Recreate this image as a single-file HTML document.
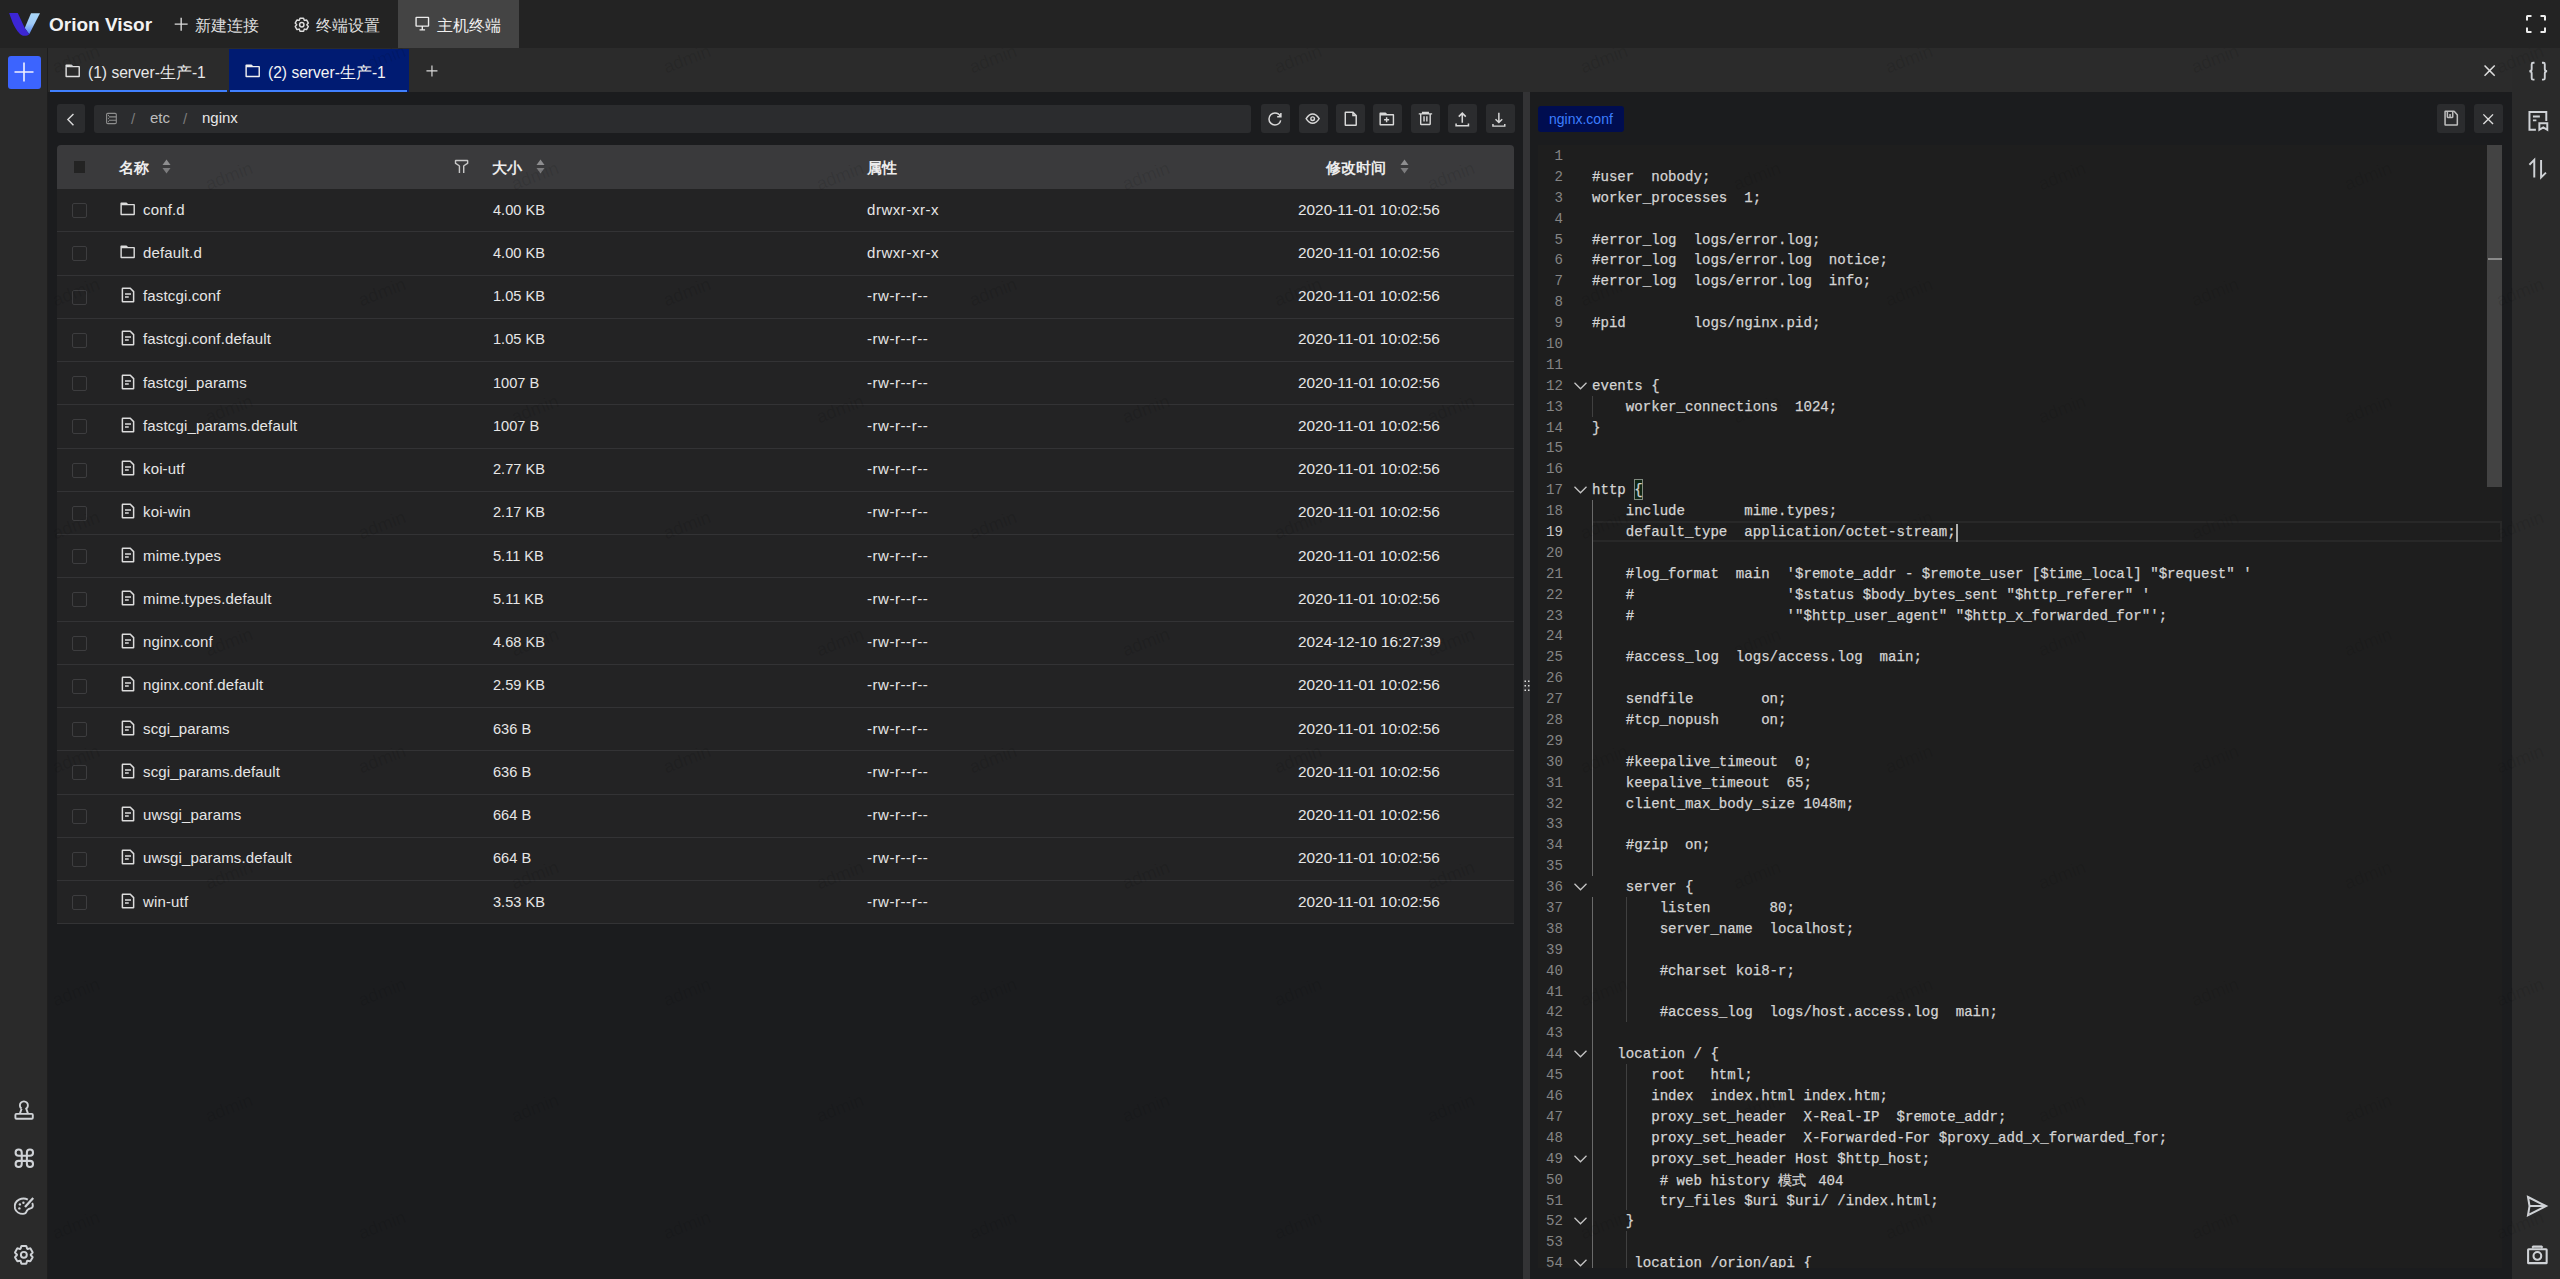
<!DOCTYPE html><html><head><meta charset="utf-8"><style>
*{box-sizing:border-box;margin:0;padding:0}
html,body{width:2560px;height:1279px;overflow:hidden;background:#1b1c1e;font-family:"Liberation Sans",sans-serif;color:rgba(255,255,255,.85)}
.a{position:absolute}
svg{display:block;position:absolute;overflow:visible}
.t{position:absolute;white-space:nowrap}
.navtxt{font-size:15.5px;color:#dedede;top:15.8px;line-height:20px}
.tabtxt{font-size:15.6px;line-height:20px;top:62.5px;color:#e8e8e8}
.btn{position:absolute;background:#2b2c2e;border-radius:3px}
.row{position:absolute;left:57px;width:1457px;height:43.25px;background:#232324;border-bottom:1px solid #333335}
.cell{position:absolute;font-size:15px;line-height:20px;top:10.6px;color:#e6e6e6;white-space:nowrap}
.cb{position:absolute;left:15px;top:14px;width:15px;height:15px;border:1.5px solid #3d3d3f;border-radius:2px}
.hd{position:absolute;font-size:15px;font-weight:bold;color:#ececec;line-height:20px;top:158px;white-space:nowrap}
.code{position:absolute;font-family:"Liberation Mono",monospace;font-size:14.1px;line-height:20.89px;white-space:pre;color:#d4d4d4;-webkit-text-stroke:0.25px #d4d4d4}
.ln{position:absolute;font-family:"Liberation Mono",monospace;font-size:14.1px;line-height:20.89px;color:#858585;text-align:right;width:40px}
.guide{position:absolute;width:1px;background:#404040}
.wm{position:absolute;width:60px;height:22px;line-height:22px;text-align:center;font-size:18px;color:rgba(0,0,0,.09);transform:rotate(-21deg);white-space:nowrap}
</style></head><body>
<div class="a" style="left:0;top:0;width:2560px;height:48px;background:#232323"></div>
<div class="a" style="left:0;top:48px;width:47px;height:1231px;background:#2a2a2a"></div>
<div class="a" style="left:47px;top:48px;width:1px;height:1231px;background:#1e1e1e"></div>
<div class="a" style="left:2512px;top:48px;width:48px;height:1231px;background:#2a2a2a"></div>
<div class="a" style="left:48px;top:48px;width:2464px;height:44px;background:#2b2b2b"></div>
<svg style="left:9px;top:13px" width="32" height="24" viewBox="0 0 32 24">
  <defs><linearGradient id="lg" x1="0" y1="0" x2="0" y2="1"><stop offset="0" stop-color="#aad7f8"/><stop offset="0.5" stop-color="#a0cbf7"/><stop offset="1" stop-color="#5080f5"/></linearGradient></defs>
  <path d="M22 0.2 L31 0.2 L20.2 21.2 L15.75 15 Z" fill="url(#lg)"/>
  <path d="M0.1 0 L8.75 0 L15.75 15 L20.2 21.2 C19.2 22.3 17.6 22.8 15.6 22.8 C13.6 22.8 12 22 10.5 20.5 C7.5 17.5 5 12.8 3.4 9 Z" fill="#3c26d4"/>
</svg>
<div class="t" style="left:49px;top:12.5px;font-size:19px;font-weight:bold;color:#f2f2f2;line-height:24px">Orion Visor</div>
<svg style="left:172.58px;top:15.98px" width="16.34" height="16.34" viewBox="0 0 48 48" fill="none" stroke="#dcdcdc" stroke-width="4" stroke-linecap="butt" stroke-linejoin="miter"><path d="M5 24h38M24 5v38"/></svg>
<div class="t navtxt" style="left:195px">新建连接</div>
<svg style="left:293.00px;top:15.54px" width="17.56" height="17.56" viewBox="0 0 48 48" fill="none" stroke="#dcdcdc" stroke-width="4" stroke-linecap="butt" stroke-linejoin="miter"><path d="M18.797 6.732A1 1 0 0 1 19.76 6h8.48a1 1 0 0 1 .964.732l1.285 4.628a1 1 0 0 0 1.213.7l4.651-1.2a1 1 0 0 1 1.116.468l4.24 7.344a1 1 0 0 1-.153 1.2L38.193 23.3a1 1 0 0 0 0 1.402l3.364 3.427a1 1 0 0 1 .153 1.2l-4.24 7.344a1 1 0 0 1-1.116.468l-4.65-1.2a1 1 0 0 0-1.214.7l-1.285 4.628a1 1 0 0 1-.964.732h-8.48a1 1 0 0 1-.963-.732L17.51 36.64a1 1 0 0 0-1.213-.7l-4.65 1.2a1 1 0 0 1-1.116-.468l-4.24-7.344a1 1 0 0 1 .153-1.2L9.809 24.7a1 1 0 0 0 0-1.402l-3.364-3.427a1 1 0 0 1-.153-1.2l4.24-7.344a1 1 0 0 1 1.116-.468l4.65 1.2a1 1 0 0 0 1.214-.7l1.285-4.628Z M30 24a6 6 0 1 1-12 0 6 6 0 0 1 12 0Z"/></svg>
<div class="t navtxt" style="left:316px">终端设置</div>
<div class="a" style="left:398px;top:0;width:121px;height:48px;background:#444"></div>
<svg style="left:414.22px;top:15.17px" width="16.62" height="16.62" viewBox="0 0 48 48" fill="none" stroke="#ececec" stroke-width="4" stroke-linecap="butt" stroke-linejoin="miter"><path d="M24 32v11m-8 0h16M7 7h34a1 1 0 0 1 1 1v23a1 1 0 0 1-1 1H7a1 1 0 0 1-1-1V8a1 1 0 0 1 1-1Z"/></svg>
<div class="t navtxt" style="left:437px;color:#f0f0f0">主机终端</div>
<svg style="left:2524.00px;top:12.00px" width="24.00" height="24.00" viewBox="0 0 48 48" fill="none" stroke="#ececec" stroke-width="4" stroke-linecap="butt" stroke-linejoin="miter"><path d="M42 17V9a1 1 0 0 0-1-1h-8M6 17V9a1 1 0 0 1 1-1h8m27 23v8a1 1 0 0 1-1 1h-8M6 31v8a1 1 0 0 0 1 1h8"/></svg>
<div class="a" style="left:8px;top:56px;width:33px;height:33px;background:#3c64fe;border-radius:3px"></div>
<svg style="left:14px;top:62px" width="20" height="20" viewBox="0 0 20 20"><path d="M10 0.5v19M0.5 10h19" stroke="#f0f0ff" stroke-width="1.6"/></svg>
<svg style="left:10px;top:1095px" width="30" height="30" viewBox="0 0 30 30" fill="none" stroke="#cfd2d6" stroke-width="1.9"><path d="M11.6 13.6A4 4 0 1 1 16.2 13.6L18 18.6M11.6 13.6L9.9 18.6"/><rect x="5.4" y="18.9" width="17.4" height="4.8" rx="1"/></svg>
<svg style="left:11.93px;top:1145.93px" width="24.63" height="24.63" viewBox="0 0 48 48" fill="none" stroke="#cfd2d6" stroke-width="4" stroke-linecap="butt" stroke-linejoin="miter"><path d="M29 19v-6a6 6 0 1 1 6 6h-6Zm0 0v10m0-10H19m10 10v6a6 6 0 1 0 6-6h-6Zm0 0H19m0-10v10m0-10h-6a6 6 0 1 1 6-6v6Zm0 10v6a6 6 0 1 1-6-6h6Z"/></svg>
<svg style="left:10px;top:1192px" width="30" height="30" viewBox="0 0 30 30" fill="none" stroke="#cfd2d6" stroke-width="1.9"><path d="M17.8 7.6C15.5 6.3 12 6.1 9 7.6 5.6 9.4 4.3 13 5 16.5 5.9 20 9.5 21.9 13 21.9 15 21.9 16 21.4 16.5 19.6 17 17.7 18.5 16.9 20.5 16.4 22.4 15.9 23 14.6 22.8 13.1 22.7 12.1 22.5 11.5 22.1 11"/><path d="M15 15 23.2 5.9" stroke-width="2.3"/><circle cx="9.9" cy="12.4" r="1.2" fill="#cfd2d6" stroke="none"/><circle cx="13.4" cy="10.7" r="1.2" fill="#cfd2d6" stroke="none"/><circle cx="9.4" cy="16.4" r="1.2" fill="#cfd2d6" stroke="none"/></svg>
<svg style="left:12.18px;top:1243.03px" width="23.70" height="23.70" viewBox="0 0 48 48" fill="none" stroke="#cfd2d6" stroke-width="4" stroke-linecap="butt" stroke-linejoin="miter"><path d="M18.797 6.732A1 1 0 0 1 19.76 6h8.48a1 1 0 0 1 .964.732l1.285 4.628a1 1 0 0 0 1.213.7l4.651-1.2a1 1 0 0 1 1.116.468l4.24 7.344a1 1 0 0 1-.153 1.2L38.193 23.3a1 1 0 0 0 0 1.402l3.364 3.427a1 1 0 0 1 .153 1.2l-4.24 7.344a1 1 0 0 1-1.116.468l-4.65-1.2a1 1 0 0 0-1.214.7l-1.285 4.628a1 1 0 0 1-.964.732h-8.48a1 1 0 0 1-.963-.732L17.51 36.64a1 1 0 0 0-1.213-.7l-4.65 1.2a1 1 0 0 1-1.116-.468l-4.24-7.344a1 1 0 0 1 .153-1.2L9.809 24.7a1 1 0 0 0 0-1.402l-3.364-3.427a1 1 0 0 1-.153-1.2l4.24-7.344a1 1 0 0 1 1.116-.468l4.65 1.2a1 1 0 0 0 1.214-.7l1.285-4.628Z M30 24a6 6 0 1 1-12 0 6 6 0 0 1 12 0Z"/></svg>
<svg style="left:2526.60px;top:60.13px" width="22.47" height="22.47" viewBox="0 0 48 48" fill="none" stroke="#cfd2d6" stroke-width="4" stroke-linecap="butt" stroke-linejoin="miter"><path d="M16 6h-3a3 3 0 0 0-3 3v10q0 5-5 5 5 0 5 5v10a3 3 0 0 0 3 3h3 M32 6h3a3 3 0 0 1 3 3v10q0 5 5 5-5 0-5 5v10a3 3 0 0 1-3 3h-3"/></svg>
<svg style="left:2525.53px;top:109.02px" width="23.76" height="23.76" viewBox="0 0 48 48" fill="none" stroke="#cfd2d6" stroke-width="4" stroke-linecap="butt" stroke-linejoin="miter"><path d="M20 42H7V6h34v18 M14 15h14M14 23h7 M27 29h16v13l-8-5-8 5Z"/></svg>
<svg style="left:2525.57px;top:157.05px" width="23.37" height="23.37" viewBox="0 0 48 48" fill="none" stroke="#cfd2d6" stroke-width="4" stroke-linecap="butt" stroke-linejoin="miter"><path d="M7 16 17 6V42 M31 6V42L41 32"/></svg>
<svg style="left:2524.79px;top:1193.99px" width="24.12" height="24.12" viewBox="0 0 48 48" fill="none" stroke="#cfd2d6" stroke-width="4" stroke-linecap="butt" stroke-linejoin="miter"><path d="M6 6 42 24 6 42 9 24Z M9 24h33"/></svg>
<svg style="left:2524.94px;top:1241.67px" width="24.75" height="24.75" viewBox="0 0 48 48" fill="none" stroke="#cfd2d6" stroke-width="4" stroke-linecap="butt" stroke-linejoin="miter"><path d="M34 11L32 9H16L14 11M24 34.5a7.5 7.5 0 1 0 0-15 7.5 7.5 0 0 0 0 15ZM7 14h34a1 1 0 0 1 1 1v25a1 1 0 0 1-1 1H7a1 1 0 0 1-1-1V15a1 1 0 0 1 1-1Z"/></svg>
<svg style="left:63.58px;top:62.02px" width="17.00" height="17.00" viewBox="0 0 48 48" fill="none" stroke="#e0e0e0" stroke-width="4" stroke-linecap="butt" stroke-linejoin="miter"><path d="M6 13h18l-2.527-3.557A1.077 1.077 0 0 0 20.6 9H6.5a.5.5 0 0 0-.5.5V13Zm0 0h36.5a.5.5 0 0 1 .5.5v27a.5.5 0 0 1-.5.5h-36a.5.5 0 0 1-.5-.5V13Z"/></svg>
<div class="t tabtxt" style="left:88px">(1) server-生产-1</div>
<div class="a" style="left:50px;top:90px;width:177px;height:2px;background:#4080ff"></div>
<div class="a" style="left:229px;top:49px;width:180px;height:43px;background:#001b72"></div>
<svg style="left:243.58px;top:62.02px" width="17.00" height="17.00" viewBox="0 0 48 48" fill="none" stroke="#f0f0f0" stroke-width="4" stroke-linecap="butt" stroke-linejoin="miter"><path d="M6 13h18l-2.527-3.557A1.077 1.077 0 0 0 20.6 9H6.5a.5.5 0 0 0-.5.5V13Zm0 0h36.5a.5.5 0 0 1 .5.5v27a.5.5 0 0 1-.5.5h-36a.5.5 0 0 1-.5-.5V13Z"/></svg>
<div class="t tabtxt" style="left:268px;color:#f4f4f4">(2) server-生产-1</div>
<div class="a" style="left:230px;top:90px;width:177px;height:2px;background:#4080ff"></div>
<svg style="left:425.38px;top:63.53px" width="13.91" height="13.91" viewBox="0 0 48 48" fill="none" stroke="#dcdcdc" stroke-width="4" stroke-linecap="butt" stroke-linejoin="miter"><path d="M5 24h38M24 5v38"/></svg>
<svg style="left:2481.18px;top:62.18px" width="17.25" height="17.25" viewBox="0 0 48 48" fill="none" stroke="#dcdcdc" stroke-width="4" stroke-linecap="butt" stroke-linejoin="miter"><path d="M9.857 9.858 24 24m0 0 14.142 14.142M24 24 38.142 9.858M24 24 9.857 38.142"/></svg>
<div class="btn" style="left:57px;top:104px;width:28px;height:29px"></div>
<svg style="left:61.82px;top:110.71px" width="17.20" height="17.20" viewBox="0 0 48 48" fill="none" stroke="#d8d8d8" stroke-width="4" stroke-linecap="butt" stroke-linejoin="miter"><path d="M32 8.4 16.444 23.956 32 39.513"/></svg>
<div class="btn" style="left:94px;top:105px;width:1157px;height:28px"></div>
<svg style="left:100px;top:106px" width="25" height="25" viewBox="0 0 25 25" fill="none" stroke="#8e8e8e" stroke-width="1.1"><rect x="6.6" y="7.4" width="9.7" height="10.2" rx="1.2"/><path d="M8.8 10.9h7.5M8.8 14.2h7.5"/><circle cx="8.4" cy="9.4" r=".55" fill="#9a9a9a" stroke="none"/><circle cx="8.4" cy="12.5" r=".55" fill="#9a9a9a" stroke="none"/><circle cx="8.4" cy="15.6" r=".55" fill="#9a9a9a" stroke="none"/></svg>
<div class="t" style="left:131px;top:109px;font-size:15px;line-height:20px;color:#7a7a7a">/</div>
<div class="t" style="left:150px;top:108px;font-size:15px;line-height:20px;color:#bcbcbc">etc</div>
<div class="t" style="left:183px;top:109px;font-size:15px;line-height:20px;color:#7a7a7a">/</div>
<div class="t" style="left:202px;top:108px;font-size:15px;line-height:20px;color:#e8e8e8">nginx</div>
<div class="btn" style="left:1261px;top:104px;width:28.5px;height:29px"></div>
<div class="btn" style="left:1299px;top:104px;width:28.5px;height:29px"></div>
<div class="btn" style="left:1336px;top:104px;width:28.5px;height:29px"></div>
<div class="btn" style="left:1373px;top:104px;width:28.5px;height:29px"></div>
<div class="btn" style="left:1411px;top:104px;width:28.5px;height:29px"></div>
<div class="btn" style="left:1448px;top:104px;width:28.5px;height:29px"></div>
<div class="btn" style="left:1486px;top:104px;width:28.5px;height:29px"></div>
<svg style="left:1266.37px;top:110.47px" width="17.87" height="17.87" viewBox="0 0 48 48" fill="none" stroke="#d8d8d8" stroke-width="4" stroke-linecap="butt" stroke-linejoin="miter"><path d="M38.837 18C36.463 12.136 30.715 8 24 8 15.163 8 8 15.163 8 24s7.163 16 16 16c7.455 0 13.72-5.099 15.496-12M40 8v10H30"/></svg>
<svg style="left:1303.86px;top:110.16px" width="17.30" height="17.30" viewBox="0 0 48 48" fill="none" stroke="#d8d8d8" stroke-width="4" stroke-linecap="butt" stroke-linejoin="miter"><path d="M24 37c6.627 0 12.627-4.333 18-13-5.373-8.667-11.373-13-18-13-6.627 0-12.627 4.333-18 13 5.373 8.667 11.373 13 18 13Z M29 24a5 5 0 1 1-10 0 5 5 0 0 1 10 0Z"/></svg>
<svg style="left:1341.85px;top:110.44px" width="17.50" height="17.50" viewBox="0 0 48 48" fill="none" stroke="#d8d8d8" stroke-width="4" stroke-linecap="butt" stroke-linejoin="miter"><path d="M30 6H10a1 1 0 0 0-1 1v34a1 1 0 0 0 1 1h28a1 1 0 0 0 1-1V15L30 6Z M30 6v9h9"/></svg>
<svg style="left:1378.36px;top:110.19px" width="17.23" height="17.23" viewBox="0 0 48 48" fill="none" stroke="#d8d8d8" stroke-width="4" stroke-linecap="butt" stroke-linejoin="miter"><path d="M6 13h18l-2.527-3.557A1.077 1.077 0 0 0 20.6 9H6.5a.5.5 0 0 0-.5.5V13Zm0 0h36.5a.5.5 0 0 1 .5.5v27a.5.5 0 0 1-.5.5h-36a.5.5 0 0 1-.5-.5V13ZM31 27H17m7-7v14"/></svg>
<svg style="left:1416.74px;top:110.24px" width="16.90" height="16.90" viewBox="0 0 48 48" fill="none" stroke="#d8d8d8" stroke-width="4" stroke-linecap="butt" stroke-linejoin="miter"><path d="M5 11h5.5m0 0v29a1 1 0 0 0 1 1h25a1 1 0 0 0 1-1V11m-27 0H16m21.5 0H43m-5.5 0H32m-16 0V7h16v4m-16 0h16M20 18v15m8-15v15"/></svg>
<svg style="left:1453.28px;top:109.58px" width="18.55" height="18.55" viewBox="0 0 48 48" fill="none" stroke="#d8d8d8" stroke-width="4" stroke-linecap="butt" stroke-linejoin="miter"><path d="M14.93 17.071 24.001 8l9.071 9.071m-9.07 16.071v-25M40 35v6H8v-6"/></svg>
<svg style="left:1490.48px;top:110.89px" width="17.73" height="17.73" viewBox="0 0 48 48" fill="none" stroke="#d8d8d8" stroke-width="4" stroke-linecap="butt" stroke-linejoin="miter"><path d="m33.072 22.071-9.07 9.071-9.072-9.07M24 5v26m16 4v6H8v-6"/></svg>
<div class="a" style="left:57px;top:145px;width:1457px;height:44px;background:#3a3a3c;border-radius:4px 4px 0 0"></div>
<div class="a" style="left:74px;top:161px;width:11px;height:12px;background:#232323"></div>
<div class="hd" style="left:118.5px">名称</div>
<svg style="left:162px;top:159px" width="9" height="15" viewBox="0 0 9 15"><path d="M0.5 6L4.5 0.5 8.5 6z" fill="#8e8e90"/><path d="M0.5 9L4.5 14.5 8.5 9z" fill="#7c7c7e"/></svg>
<svg style="left:453.01px;top:158.21px" width="17.15" height="17.15" viewBox="0 0 48 48" fill="none" stroke="#c8c8c8" stroke-width="4" stroke-linecap="butt" stroke-linejoin="miter"><path d="M30 42V22.549a1 1 0 0 1 .463-.844l10.074-6.41A1 1 0 0 0 41 14.45V8a1 1 0 0 0-1-1H8a1 1 0 0 0-1 1v6.451a1 1 0 0 0 .463.844l10.074 6.41a1 1 0 0 1 .463.844V42"/></svg>
<div class="hd" style="left:492px">大小</div>
<svg style="left:536px;top:159px" width="9" height="15" viewBox="0 0 9 15"><path d="M0.5 6L4.5 0.5 8.5 6z" fill="#8e8e90"/><path d="M0.5 9L4.5 14.5 8.5 9z" fill="#7c7c7e"/></svg>
<div class="hd" style="left:867px">属性</div>
<div class="hd" style="left:1326px">修改时间</div>
<svg style="left:1400px;top:159px" width="9" height="15" viewBox="0 0 9 15"><path d="M0.5 6L4.5 0.5 8.5 6z" fill="#8e8e90"/><path d="M0.5 9L4.5 14.5 8.5 9z" fill="#7c7c7e"/></svg>
<div class="row" style="top:189.0px"><div class="cb"></div><svg style="left:61.58px;top:10.72px" width="16.98" height="16.98" viewBox="0 0 48 48" fill="none" stroke="#dcdcdc" stroke-width="4" stroke-linecap="butt" stroke-linejoin="miter"><path d="M6 13h18l-2.527-3.557A1.077 1.077 0 0 0 20.6 9H6.5a.5.5 0 0 0-.5.5V13Zm0 0h36.5a.5.5 0 0 1 .5.5v27a.5.5 0 0 1-.5.5h-36a.5.5 0 0 1-.5-.5V13Z"/></svg><div class="cell" style="left:86px;letter-spacing:0.15px">conf.d</div><div class="cell" style="left:436px;font-size:14.6px">4.00 KB</div><div class="cell" style="left:810px;letter-spacing:0.55px">drwxr-xr-x</div><div class="cell" style="left:1241px;font-size:15.4px">2020-11-01 10:02:56</div></div>
<div class="row" style="top:232.25px"><div class="cb"></div><svg style="left:61.58px;top:10.72px" width="16.98" height="16.98" viewBox="0 0 48 48" fill="none" stroke="#dcdcdc" stroke-width="4" stroke-linecap="butt" stroke-linejoin="miter"><path d="M6 13h18l-2.527-3.557A1.077 1.077 0 0 0 20.6 9H6.5a.5.5 0 0 0-.5.5V13Zm0 0h36.5a.5.5 0 0 1 .5.5v27a.5.5 0 0 1-.5.5h-36a.5.5 0 0 1-.5-.5V13Z"/></svg><div class="cell" style="left:86px;letter-spacing:0.15px">default.d</div><div class="cell" style="left:436px;font-size:14.6px">4.00 KB</div><div class="cell" style="left:810px;letter-spacing:0.55px">drwxr-xr-x</div><div class="cell" style="left:1241px;font-size:15.4px">2020-11-01 10:02:56</div></div>
<div class="row" style="top:275.5px"><div class="cb"></div><svg style="left:61.88px;top:10.50px" width="18.00" height="18.00" viewBox="0 0 48 48" fill="none" stroke="#dcdcdc" stroke-width="4" stroke-linecap="butt" stroke-linejoin="miter"><path d="M16 21h16m-16 8h10M30 6H10a1 1 0 0 0-1 1v34a1 1 0 0 0 1 1h28a1 1 0 0 0 1-1V15L30 6Z"/></svg><div class="cell" style="left:86px;letter-spacing:0.15px">fastcgi.conf</div><div class="cell" style="left:436px;font-size:14.6px">1.05 KB</div><div class="cell" style="left:810px;letter-spacing:0.55px">-rw-r--r--</div><div class="cell" style="left:1241px;font-size:15.4px">2020-11-01 10:02:56</div></div>
<div class="row" style="top:318.75px"><div class="cb"></div><svg style="left:61.88px;top:10.50px" width="18.00" height="18.00" viewBox="0 0 48 48" fill="none" stroke="#dcdcdc" stroke-width="4" stroke-linecap="butt" stroke-linejoin="miter"><path d="M16 21h16m-16 8h10M30 6H10a1 1 0 0 0-1 1v34a1 1 0 0 0 1 1h28a1 1 0 0 0 1-1V15L30 6Z"/></svg><div class="cell" style="left:86px;letter-spacing:0.15px">fastcgi.conf.default</div><div class="cell" style="left:436px;font-size:14.6px">1.05 KB</div><div class="cell" style="left:810px;letter-spacing:0.55px">-rw-r--r--</div><div class="cell" style="left:1241px;font-size:15.4px">2020-11-01 10:02:56</div></div>
<div class="row" style="top:362.0px"><div class="cb"></div><svg style="left:61.88px;top:10.50px" width="18.00" height="18.00" viewBox="0 0 48 48" fill="none" stroke="#dcdcdc" stroke-width="4" stroke-linecap="butt" stroke-linejoin="miter"><path d="M16 21h16m-16 8h10M30 6H10a1 1 0 0 0-1 1v34a1 1 0 0 0 1 1h28a1 1 0 0 0 1-1V15L30 6Z"/></svg><div class="cell" style="left:86px;letter-spacing:0.15px">fastcgi_params</div><div class="cell" style="left:436px;font-size:14.6px">1007 B</div><div class="cell" style="left:810px;letter-spacing:0.55px">-rw-r--r--</div><div class="cell" style="left:1241px;font-size:15.4px">2020-11-01 10:02:56</div></div>
<div class="row" style="top:405.25px"><div class="cb"></div><svg style="left:61.88px;top:10.50px" width="18.00" height="18.00" viewBox="0 0 48 48" fill="none" stroke="#dcdcdc" stroke-width="4" stroke-linecap="butt" stroke-linejoin="miter"><path d="M16 21h16m-16 8h10M30 6H10a1 1 0 0 0-1 1v34a1 1 0 0 0 1 1h28a1 1 0 0 0 1-1V15L30 6Z"/></svg><div class="cell" style="left:86px;letter-spacing:0.15px">fastcgi_params.default</div><div class="cell" style="left:436px;font-size:14.6px">1007 B</div><div class="cell" style="left:810px;letter-spacing:0.55px">-rw-r--r--</div><div class="cell" style="left:1241px;font-size:15.4px">2020-11-01 10:02:56</div></div>
<div class="row" style="top:448.5px"><div class="cb"></div><svg style="left:61.88px;top:10.50px" width="18.00" height="18.00" viewBox="0 0 48 48" fill="none" stroke="#dcdcdc" stroke-width="4" stroke-linecap="butt" stroke-linejoin="miter"><path d="M16 21h16m-16 8h10M30 6H10a1 1 0 0 0-1 1v34a1 1 0 0 0 1 1h28a1 1 0 0 0 1-1V15L30 6Z"/></svg><div class="cell" style="left:86px;letter-spacing:0.15px">koi-utf</div><div class="cell" style="left:436px;font-size:14.6px">2.77 KB</div><div class="cell" style="left:810px;letter-spacing:0.55px">-rw-r--r--</div><div class="cell" style="left:1241px;font-size:15.4px">2020-11-01 10:02:56</div></div>
<div class="row" style="top:491.75px"><div class="cb"></div><svg style="left:61.88px;top:10.50px" width="18.00" height="18.00" viewBox="0 0 48 48" fill="none" stroke="#dcdcdc" stroke-width="4" stroke-linecap="butt" stroke-linejoin="miter"><path d="M16 21h16m-16 8h10M30 6H10a1 1 0 0 0-1 1v34a1 1 0 0 0 1 1h28a1 1 0 0 0 1-1V15L30 6Z"/></svg><div class="cell" style="left:86px;letter-spacing:0.15px">koi-win</div><div class="cell" style="left:436px;font-size:14.6px">2.17 KB</div><div class="cell" style="left:810px;letter-spacing:0.55px">-rw-r--r--</div><div class="cell" style="left:1241px;font-size:15.4px">2020-11-01 10:02:56</div></div>
<div class="row" style="top:535.0px"><div class="cb"></div><svg style="left:61.88px;top:10.50px" width="18.00" height="18.00" viewBox="0 0 48 48" fill="none" stroke="#dcdcdc" stroke-width="4" stroke-linecap="butt" stroke-linejoin="miter"><path d="M16 21h16m-16 8h10M30 6H10a1 1 0 0 0-1 1v34a1 1 0 0 0 1 1h28a1 1 0 0 0 1-1V15L30 6Z"/></svg><div class="cell" style="left:86px;letter-spacing:0.15px">mime.types</div><div class="cell" style="left:436px;font-size:14.6px">5.11 KB</div><div class="cell" style="left:810px;letter-spacing:0.55px">-rw-r--r--</div><div class="cell" style="left:1241px;font-size:15.4px">2020-11-01 10:02:56</div></div>
<div class="row" style="top:578.25px"><div class="cb"></div><svg style="left:61.88px;top:10.50px" width="18.00" height="18.00" viewBox="0 0 48 48" fill="none" stroke="#dcdcdc" stroke-width="4" stroke-linecap="butt" stroke-linejoin="miter"><path d="M16 21h16m-16 8h10M30 6H10a1 1 0 0 0-1 1v34a1 1 0 0 0 1 1h28a1 1 0 0 0 1-1V15L30 6Z"/></svg><div class="cell" style="left:86px;letter-spacing:0.15px">mime.types.default</div><div class="cell" style="left:436px;font-size:14.6px">5.11 KB</div><div class="cell" style="left:810px;letter-spacing:0.55px">-rw-r--r--</div><div class="cell" style="left:1241px;font-size:15.4px">2020-11-01 10:02:56</div></div>
<div class="row" style="top:621.5px"><div class="cb"></div><svg style="left:61.88px;top:10.50px" width="18.00" height="18.00" viewBox="0 0 48 48" fill="none" stroke="#dcdcdc" stroke-width="4" stroke-linecap="butt" stroke-linejoin="miter"><path d="M16 21h16m-16 8h10M30 6H10a1 1 0 0 0-1 1v34a1 1 0 0 0 1 1h28a1 1 0 0 0 1-1V15L30 6Z"/></svg><div class="cell" style="left:86px;letter-spacing:0.15px">nginx.conf</div><div class="cell" style="left:436px;font-size:14.6px">4.68 KB</div><div class="cell" style="left:810px;letter-spacing:0.55px">-rw-r--r--</div><div class="cell" style="left:1241px;font-size:15.4px">2024-12-10 16:27:39</div></div>
<div class="row" style="top:664.75px"><div class="cb"></div><svg style="left:61.88px;top:10.50px" width="18.00" height="18.00" viewBox="0 0 48 48" fill="none" stroke="#dcdcdc" stroke-width="4" stroke-linecap="butt" stroke-linejoin="miter"><path d="M16 21h16m-16 8h10M30 6H10a1 1 0 0 0-1 1v34a1 1 0 0 0 1 1h28a1 1 0 0 0 1-1V15L30 6Z"/></svg><div class="cell" style="left:86px;letter-spacing:0.15px">nginx.conf.default</div><div class="cell" style="left:436px;font-size:14.6px">2.59 KB</div><div class="cell" style="left:810px;letter-spacing:0.55px">-rw-r--r--</div><div class="cell" style="left:1241px;font-size:15.4px">2020-11-01 10:02:56</div></div>
<div class="row" style="top:708.0px"><div class="cb"></div><svg style="left:61.88px;top:10.50px" width="18.00" height="18.00" viewBox="0 0 48 48" fill="none" stroke="#dcdcdc" stroke-width="4" stroke-linecap="butt" stroke-linejoin="miter"><path d="M16 21h16m-16 8h10M30 6H10a1 1 0 0 0-1 1v34a1 1 0 0 0 1 1h28a1 1 0 0 0 1-1V15L30 6Z"/></svg><div class="cell" style="left:86px;letter-spacing:0.15px">scgi_params</div><div class="cell" style="left:436px;font-size:14.6px">636 B</div><div class="cell" style="left:810px;letter-spacing:0.55px">-rw-r--r--</div><div class="cell" style="left:1241px;font-size:15.4px">2020-11-01 10:02:56</div></div>
<div class="row" style="top:751.25px"><div class="cb"></div><svg style="left:61.88px;top:10.50px" width="18.00" height="18.00" viewBox="0 0 48 48" fill="none" stroke="#dcdcdc" stroke-width="4" stroke-linecap="butt" stroke-linejoin="miter"><path d="M16 21h16m-16 8h10M30 6H10a1 1 0 0 0-1 1v34a1 1 0 0 0 1 1h28a1 1 0 0 0 1-1V15L30 6Z"/></svg><div class="cell" style="left:86px;letter-spacing:0.15px">scgi_params.default</div><div class="cell" style="left:436px;font-size:14.6px">636 B</div><div class="cell" style="left:810px;letter-spacing:0.55px">-rw-r--r--</div><div class="cell" style="left:1241px;font-size:15.4px">2020-11-01 10:02:56</div></div>
<div class="row" style="top:794.5px"><div class="cb"></div><svg style="left:61.88px;top:10.50px" width="18.00" height="18.00" viewBox="0 0 48 48" fill="none" stroke="#dcdcdc" stroke-width="4" stroke-linecap="butt" stroke-linejoin="miter"><path d="M16 21h16m-16 8h10M30 6H10a1 1 0 0 0-1 1v34a1 1 0 0 0 1 1h28a1 1 0 0 0 1-1V15L30 6Z"/></svg><div class="cell" style="left:86px;letter-spacing:0.15px">uwsgi_params</div><div class="cell" style="left:436px;font-size:14.6px">664 B</div><div class="cell" style="left:810px;letter-spacing:0.55px">-rw-r--r--</div><div class="cell" style="left:1241px;font-size:15.4px">2020-11-01 10:02:56</div></div>
<div class="row" style="top:837.75px"><div class="cb"></div><svg style="left:61.88px;top:10.50px" width="18.00" height="18.00" viewBox="0 0 48 48" fill="none" stroke="#dcdcdc" stroke-width="4" stroke-linecap="butt" stroke-linejoin="miter"><path d="M16 21h16m-16 8h10M30 6H10a1 1 0 0 0-1 1v34a1 1 0 0 0 1 1h28a1 1 0 0 0 1-1V15L30 6Z"/></svg><div class="cell" style="left:86px;letter-spacing:0.15px">uwsgi_params.default</div><div class="cell" style="left:436px;font-size:14.6px">664 B</div><div class="cell" style="left:810px;letter-spacing:0.55px">-rw-r--r--</div><div class="cell" style="left:1241px;font-size:15.4px">2020-11-01 10:02:56</div></div>
<div class="row" style="top:881.0px"><div class="cb"></div><svg style="left:61.88px;top:10.50px" width="18.00" height="18.00" viewBox="0 0 48 48" fill="none" stroke="#dcdcdc" stroke-width="4" stroke-linecap="butt" stroke-linejoin="miter"><path d="M16 21h16m-16 8h10M30 6H10a1 1 0 0 0-1 1v34a1 1 0 0 0 1 1h28a1 1 0 0 0 1-1V15L30 6Z"/></svg><div class="cell" style="left:86px;letter-spacing:0.15px">win-utf</div><div class="cell" style="left:436px;font-size:14.6px">3.53 KB</div><div class="cell" style="left:810px;letter-spacing:0.55px">-rw-r--r--</div><div class="cell" style="left:1241px;font-size:15.4px">2020-11-01 10:02:56</div></div>
<div class="a" style="left:1523px;top:92px;width:7px;height:1187px;background:#333335"></div>
<svg style="left:1524px;top:680px" width="6" height="12" viewBox="0 0 6 12" fill="#e0e0e0"><rect x="0.5" y="0.5" width="1.5" height="1.5"/><rect x="4" y="0.5" width="1.5" height="1.5"/><rect x="0.5" y="5" width="1.5" height="1.5"/><rect x="4" y="5" width="1.5" height="1.5"/><rect x="0.5" y="9.5" width="1.5" height="1.5"/><rect x="4" y="9.5" width="1.5" height="1.5"/></svg>
<div class="a" style="left:1538px;top:106px;width:86px;height:26px;background:#000d50;border-radius:3px"></div>
<div class="t" style="left:1549px;top:109px;font-size:14px;line-height:20px;color:#3c7eff">nginx.conf</div>
<div class="btn" style="left:2437px;top:104px;width:28px;height:29px"></div>
<svg style="left:2441.50px;top:109.47px" width="18.40" height="18.40" viewBox="0 0 48 48" fill="none" stroke="#bdbdbd" stroke-width="4" stroke-linecap="butt" stroke-linejoin="miter"><path d="M21 13v9m18 20H9a1 1 0 0 1-1-1V7a1 1 0 0 1 1-1h22.55a1 1 0 0 1 .748.336l7.45 8.38a1 1 0 0 1 .252.664V41a1 1 0 0 1-1 1ZM14 6h14v15a1 1 0 0 1-1 1H15a1 1 0 0 1-1-1V6Z"/></svg>
<div class="btn" style="left:2474px;top:104px;width:29px;height:29px"></div>
<svg style="left:2480.31px;top:110.81px" width="16.43" height="16.43" viewBox="0 0 48 48" fill="none" stroke="#dcdcdc" stroke-width="4" stroke-linecap="butt" stroke-linejoin="miter"><path d="M9.857 9.858 24 24m0 0 14.142 14.142M24 24 38.142 9.858M24 24 9.857 38.142"/></svg>
<div class="a" style="left:1538px;top:145px;width:964px;height:1124px;background:#1e1e1e"></div>
<div class="a" style="left:1592px;top:521.02px;width:910px;height:20.89px;border:2px solid #282828;border-left:none"></div>
<div class="guide" style="left:1592.0px;top:395.68px;height:20.89px;background:#404040"></div>
<div class="guide" style="left:1592.0px;top:500.13px;height:376.02px;background:#6a6a6a"></div>
<div class="guide" style="left:1592.0px;top:897.04px;height:376.02px;background:#6a6a6a"></div>
<div class="guide" style="left:1625.84px;top:897.04px;height:125.34px;background:#404040"></div>
<div class="guide" style="left:1625.84px;top:1064.16px;height:146.23000000000002px;background:#404040"></div>
<div class="guide" style="left:1625.84px;top:1231.28px;height:41.78px;background:#404040"></div>
<div class="a" style="left:1633.8px;top:479.24px;width:8.96px;height:21.19px;border:1px solid #808a80;background:#0f2513"></div>
<div class="ln" style="left:1523px;top:146.0px;color:#858585">1</div>
<div class="ln" style="left:1523px;top:166.89px;color:#858585">2</div>
<div class="code" style="left:1592px;top:166.89px">#user  nobody;</div>
<div class="ln" style="left:1523px;top:187.78px;color:#858585">3</div>
<div class="code" style="left:1592px;top:187.78px">worker_processes  1;</div>
<div class="ln" style="left:1523px;top:208.67000000000002px;color:#858585">4</div>
<div class="ln" style="left:1523px;top:229.56px;color:#858585">5</div>
<div class="code" style="left:1592px;top:229.56px">#error_log  logs/error.log;</div>
<div class="ln" style="left:1523px;top:250.45px;color:#858585">6</div>
<div class="code" style="left:1592px;top:250.45px">#error_log  logs/error.log  notice;</div>
<div class="ln" style="left:1523px;top:271.34000000000003px;color:#858585">7</div>
<div class="code" style="left:1592px;top:271.34000000000003px">#error_log  logs/error.log  info;</div>
<div class="ln" style="left:1523px;top:292.23px;color:#858585">8</div>
<div class="ln" style="left:1523px;top:313.12px;color:#858585">9</div>
<div class="code" style="left:1592px;top:313.12px">#pid        logs/nginx.pid;</div>
<div class="ln" style="left:1523px;top:334.01px;color:#858585">10</div>
<div class="ln" style="left:1523px;top:354.9px;color:#858585">11</div>
<div class="ln" style="left:1523px;top:375.79px;color:#858585">12</div>
<div class="code" style="left:1592px;top:375.79px">events {</div>
<svg style="left:1574px;top:381.79px" width="13" height="8" viewBox="0 0 13 8"><path d="M0.5 0.8L6.5 6.8 12.5 0.8" fill="none" stroke="#c5c5c5" stroke-width="1.3"/></svg>
<div class="ln" style="left:1523px;top:396.68px;color:#858585">13</div>
<div class="code" style="left:1592px;top:396.68px">    worker_connections  1024;</div>
<div class="ln" style="left:1523px;top:417.57px;color:#858585">14</div>
<div class="code" style="left:1592px;top:417.57px">}</div>
<div class="ln" style="left:1523px;top:438.46000000000004px;color:#858585">15</div>
<div class="ln" style="left:1523px;top:459.35px;color:#858585">16</div>
<div class="ln" style="left:1523px;top:480.24px;color:#858585">17</div>
<div class="code" style="left:1592px;top:480.24px">http {</div>
<svg style="left:1574px;top:486.24px" width="13" height="8" viewBox="0 0 13 8"><path d="M0.5 0.8L6.5 6.8 12.5 0.8" fill="none" stroke="#c5c5c5" stroke-width="1.3"/></svg>
<div class="ln" style="left:1523px;top:501.13px;color:#858585">18</div>
<div class="code" style="left:1592px;top:501.13px">    include       mime.types;</div>
<div class="ln" style="left:1523px;top:522.02px;color:#c6c6c6">19</div>
<div class="code" style="left:1592px;top:522.02px">    default_type  application/octet-stream;</div>
<div class="ln" style="left:1523px;top:542.9100000000001px;color:#858585">20</div>
<div class="ln" style="left:1523px;top:563.8px;color:#858585">21</div>
<div class="code" style="left:1592px;top:563.8px">    #log_format  main  &#x27;$remote_addr - $remote_user [$time_local] &quot;$request&quot; &#x27;</div>
<div class="ln" style="left:1523px;top:584.69px;color:#858585">22</div>
<div class="code" style="left:1592px;top:584.69px">    #                  &#x27;$status $body_bytes_sent &quot;$http_referer&quot; &#x27;</div>
<div class="ln" style="left:1523px;top:605.58px;color:#858585">23</div>
<div class="code" style="left:1592px;top:605.58px">    #                  &#x27;&quot;$http_user_agent&quot; &quot;$http_x_forwarded_for&quot;&#x27;;</div>
<div class="ln" style="left:1523px;top:626.47px;color:#858585">24</div>
<div class="ln" style="left:1523px;top:647.36px;color:#858585">25</div>
<div class="code" style="left:1592px;top:647.36px">    #access_log  logs/access.log  main;</div>
<div class="ln" style="left:1523px;top:668.25px;color:#858585">26</div>
<div class="ln" style="left:1523px;top:689.14px;color:#858585">27</div>
<div class="code" style="left:1592px;top:689.14px">    sendfile        on;</div>
<div class="ln" style="left:1523px;top:710.03px;color:#858585">28</div>
<div class="code" style="left:1592px;top:710.03px">    #tcp_nopush     on;</div>
<div class="ln" style="left:1523px;top:730.9200000000001px;color:#858585">29</div>
<div class="ln" style="left:1523px;top:751.8100000000001px;color:#858585">30</div>
<div class="code" style="left:1592px;top:751.8100000000001px">    #keepalive_timeout  0;</div>
<div class="ln" style="left:1523px;top:772.7px;color:#858585">31</div>
<div class="code" style="left:1592px;top:772.7px">    keepalive_timeout  65;</div>
<div class="ln" style="left:1523px;top:793.59px;color:#858585">32</div>
<div class="code" style="left:1592px;top:793.59px">    client_max_body_size 1048m;</div>
<div class="ln" style="left:1523px;top:814.48px;color:#858585">33</div>
<div class="ln" style="left:1523px;top:835.37px;color:#858585">34</div>
<div class="code" style="left:1592px;top:835.37px">    #gzip  on;</div>
<div class="ln" style="left:1523px;top:856.26px;color:#858585">35</div>
<div class="ln" style="left:1523px;top:877.15px;color:#858585">36</div>
<div class="code" style="left:1592px;top:877.15px">    server {</div>
<svg style="left:1574px;top:883.15px" width="13" height="8" viewBox="0 0 13 8"><path d="M0.5 0.8L6.5 6.8 12.5 0.8" fill="none" stroke="#c5c5c5" stroke-width="1.3"/></svg>
<div class="ln" style="left:1523px;top:898.04px;color:#858585">37</div>
<div class="code" style="left:1592px;top:898.04px">        listen       80;</div>
<div class="ln" style="left:1523px;top:918.9300000000001px;color:#858585">38</div>
<div class="code" style="left:1592px;top:918.9300000000001px">        server_name  localhost;</div>
<div class="ln" style="left:1523px;top:939.82px;color:#858585">39</div>
<div class="ln" style="left:1523px;top:960.71px;color:#858585">40</div>
<div class="code" style="left:1592px;top:960.71px">        #charset koi8-r;</div>
<div class="ln" style="left:1523px;top:981.6px;color:#858585">41</div>
<div class="ln" style="left:1523px;top:1002.49px;color:#858585">42</div>
<div class="code" style="left:1592px;top:1002.49px">        #access_log  logs/host.access.log  main;</div>
<div class="ln" style="left:1523px;top:1023.38px;color:#858585">43</div>
<div class="ln" style="left:1523px;top:1044.27px;color:#858585">44</div>
<div class="code" style="left:1592px;top:1044.27px">   location / {</div>
<svg style="left:1574px;top:1050.27px" width="13" height="8" viewBox="0 0 13 8"><path d="M0.5 0.8L6.5 6.8 12.5 0.8" fill="none" stroke="#c5c5c5" stroke-width="1.3"/></svg>
<div class="ln" style="left:1523px;top:1065.16px;color:#858585">45</div>
<div class="code" style="left:1592px;top:1065.16px">       root   html;</div>
<div class="ln" style="left:1523px;top:1086.0500000000002px;color:#858585">46</div>
<div class="code" style="left:1592px;top:1086.0500000000002px">       index  index.html index.htm;</div>
<div class="ln" style="left:1523px;top:1106.94px;color:#858585">47</div>
<div class="code" style="left:1592px;top:1106.94px">       proxy_set_header  X-Real-IP  $remote_addr;</div>
<div class="ln" style="left:1523px;top:1127.83px;color:#858585">48</div>
<div class="code" style="left:1592px;top:1127.83px">       proxy_set_header  X-Forwarded-For $proxy_add_x_forwarded_for;</div>
<div class="ln" style="left:1523px;top:1148.72px;color:#858585">49</div>
<div class="code" style="left:1592px;top:1148.72px">       proxy_set_header Host $http_host;</div>
<svg style="left:1574px;top:1154.72px" width="13" height="8" viewBox="0 0 13 8"><path d="M0.5 0.8L6.5 6.8 12.5 0.8" fill="none" stroke="#c5c5c5" stroke-width="1.3"/></svg>
<div class="ln" style="left:1523px;top:1169.6100000000001px;color:#858585">50</div>
<div class="code" style="left:1592px;top:1169.6100000000001px">        # web history <span style="display:inline-block;width:31.6px;font-family:Liberation Sans,sans-serif">模式</span> 404</div>
<div class="ln" style="left:1523px;top:1190.5px;color:#858585">51</div>
<div class="code" style="left:1592px;top:1190.5px">        try_files $uri $uri/ /index.html;</div>
<div class="ln" style="left:1523px;top:1211.39px;color:#858585">52</div>
<div class="code" style="left:1592px;top:1211.39px">    }</div>
<svg style="left:1574px;top:1217.39px" width="13" height="8" viewBox="0 0 13 8"><path d="M0.5 0.8L6.5 6.8 12.5 0.8" fill="none" stroke="#c5c5c5" stroke-width="1.3"/></svg>
<div class="ln" style="left:1523px;top:1232.28px;color:#858585">53</div>
<div class="ln" style="left:1523px;top:1253.17px;color:#858585">54</div>
<div class="code" style="left:1592px;top:1253.17px">     location /orion/api {</div>
<svg style="left:1574px;top:1259.17px" width="13" height="8" viewBox="0 0 13 8"><path d="M0.5 0.8L6.5 6.8 12.5 0.8" fill="none" stroke="#c5c5c5" stroke-width="1.3"/></svg>
<div class="a" style="left:1956px;top:524.02px;width:2px;height:17.89px;background:#aeafad"></div>
<div class="a" style="left:2487px;top:145px;width:15px;height:342px;background:#434343"></div>
<div class="a" style="left:2488px;top:258px;width:14px;height:2px;background:#8a8a8a"></div>
<div class="a" style="left:1530px;top:1268px;width:982px;height:11px;background:#1b1c1e"></div>
<div class="a" style="left:0;top:0;width:2560px;height:1279px;overflow:hidden;pointer-events:none"><div class="wm" style="left:-259.5px;top:48.0px">admin</div><div class="wm" style="left:46.0px;top:48.0px">admin</div><div class="wm" style="left:351.5px;top:48.0px">admin</div><div class="wm" style="left:657.0px;top:48.0px">admin</div><div class="wm" style="left:962.5px;top:48.0px">admin</div><div class="wm" style="left:1268.0px;top:48.0px">admin</div><div class="wm" style="left:1573.5px;top:48.0px">admin</div><div class="wm" style="left:1879.0px;top:48.0px">admin</div><div class="wm" style="left:2184.5px;top:48.0px">admin</div><div class="wm" style="left:2490.0px;top:48.0px">admin</div><div class="wm" style="left:-106.5px;top:164.6px">admin</div><div class="wm" style="left:199.0px;top:164.6px">admin</div><div class="wm" style="left:504.5px;top:164.6px">admin</div><div class="wm" style="left:810.0px;top:164.6px">admin</div><div class="wm" style="left:1115.5px;top:164.6px">admin</div><div class="wm" style="left:1421.0px;top:164.6px">admin</div><div class="wm" style="left:1726.5px;top:164.6px">admin</div><div class="wm" style="left:2032.0px;top:164.6px">admin</div><div class="wm" style="left:2337.5px;top:164.6px">admin</div><div class="wm" style="left:-259.5px;top:281.2px">admin</div><div class="wm" style="left:46.0px;top:281.2px">admin</div><div class="wm" style="left:351.5px;top:281.2px">admin</div><div class="wm" style="left:657.0px;top:281.2px">admin</div><div class="wm" style="left:962.5px;top:281.2px">admin</div><div class="wm" style="left:1268.0px;top:281.2px">admin</div><div class="wm" style="left:1573.5px;top:281.2px">admin</div><div class="wm" style="left:1879.0px;top:281.2px">admin</div><div class="wm" style="left:2184.5px;top:281.2px">admin</div><div class="wm" style="left:2490.0px;top:281.2px">admin</div><div class="wm" style="left:-106.5px;top:397.8px">admin</div><div class="wm" style="left:199.0px;top:397.8px">admin</div><div class="wm" style="left:504.5px;top:397.8px">admin</div><div class="wm" style="left:810.0px;top:397.8px">admin</div><div class="wm" style="left:1115.5px;top:397.8px">admin</div><div class="wm" style="left:1421.0px;top:397.8px">admin</div><div class="wm" style="left:1726.5px;top:397.8px">admin</div><div class="wm" style="left:2032.0px;top:397.8px">admin</div><div class="wm" style="left:2337.5px;top:397.8px">admin</div><div class="wm" style="left:-259.5px;top:514.4px">admin</div><div class="wm" style="left:46.0px;top:514.4px">admin</div><div class="wm" style="left:351.5px;top:514.4px">admin</div><div class="wm" style="left:657.0px;top:514.4px">admin</div><div class="wm" style="left:962.5px;top:514.4px">admin</div><div class="wm" style="left:1268.0px;top:514.4px">admin</div><div class="wm" style="left:1573.5px;top:514.4px">admin</div><div class="wm" style="left:1879.0px;top:514.4px">admin</div><div class="wm" style="left:2184.5px;top:514.4px">admin</div><div class="wm" style="left:2490.0px;top:514.4px">admin</div><div class="wm" style="left:-106.5px;top:631.0px">admin</div><div class="wm" style="left:199.0px;top:631.0px">admin</div><div class="wm" style="left:504.5px;top:631.0px">admin</div><div class="wm" style="left:810.0px;top:631.0px">admin</div><div class="wm" style="left:1115.5px;top:631.0px">admin</div><div class="wm" style="left:1421.0px;top:631.0px">admin</div><div class="wm" style="left:1726.5px;top:631.0px">admin</div><div class="wm" style="left:2032.0px;top:631.0px">admin</div><div class="wm" style="left:2337.5px;top:631.0px">admin</div><div class="wm" style="left:-259.5px;top:747.6px">admin</div><div class="wm" style="left:46.0px;top:747.6px">admin</div><div class="wm" style="left:351.5px;top:747.6px">admin</div><div class="wm" style="left:657.0px;top:747.6px">admin</div><div class="wm" style="left:962.5px;top:747.6px">admin</div><div class="wm" style="left:1268.0px;top:747.6px">admin</div><div class="wm" style="left:1573.5px;top:747.6px">admin</div><div class="wm" style="left:1879.0px;top:747.6px">admin</div><div class="wm" style="left:2184.5px;top:747.6px">admin</div><div class="wm" style="left:2490.0px;top:747.6px">admin</div><div class="wm" style="left:-106.5px;top:864.2px">admin</div><div class="wm" style="left:199.0px;top:864.2px">admin</div><div class="wm" style="left:504.5px;top:864.2px">admin</div><div class="wm" style="left:810.0px;top:864.2px">admin</div><div class="wm" style="left:1115.5px;top:864.2px">admin</div><div class="wm" style="left:1421.0px;top:864.2px">admin</div><div class="wm" style="left:1726.5px;top:864.2px">admin</div><div class="wm" style="left:2032.0px;top:864.2px">admin</div><div class="wm" style="left:2337.5px;top:864.2px">admin</div><div class="wm" style="left:-259.5px;top:980.8px">admin</div><div class="wm" style="left:46.0px;top:980.8px">admin</div><div class="wm" style="left:351.5px;top:980.8px">admin</div><div class="wm" style="left:657.0px;top:980.8px">admin</div><div class="wm" style="left:962.5px;top:980.8px">admin</div><div class="wm" style="left:1268.0px;top:980.8px">admin</div><div class="wm" style="left:1573.5px;top:980.8px">admin</div><div class="wm" style="left:1879.0px;top:980.8px">admin</div><div class="wm" style="left:2184.5px;top:980.8px">admin</div><div class="wm" style="left:2490.0px;top:980.8px">admin</div><div class="wm" style="left:-106.5px;top:1097.4px">admin</div><div class="wm" style="left:199.0px;top:1097.4px">admin</div><div class="wm" style="left:504.5px;top:1097.4px">admin</div><div class="wm" style="left:810.0px;top:1097.4px">admin</div><div class="wm" style="left:1115.5px;top:1097.4px">admin</div><div class="wm" style="left:1421.0px;top:1097.4px">admin</div><div class="wm" style="left:1726.5px;top:1097.4px">admin</div><div class="wm" style="left:2032.0px;top:1097.4px">admin</div><div class="wm" style="left:2337.5px;top:1097.4px">admin</div><div class="wm" style="left:-259.5px;top:1214.0px">admin</div><div class="wm" style="left:46.0px;top:1214.0px">admin</div><div class="wm" style="left:351.5px;top:1214.0px">admin</div><div class="wm" style="left:657.0px;top:1214.0px">admin</div><div class="wm" style="left:962.5px;top:1214.0px">admin</div><div class="wm" style="left:1268.0px;top:1214.0px">admin</div><div class="wm" style="left:1573.5px;top:1214.0px">admin</div><div class="wm" style="left:1879.0px;top:1214.0px">admin</div><div class="wm" style="left:2184.5px;top:1214.0px">admin</div><div class="wm" style="left:2490.0px;top:1214.0px">admin</div></div>
</body></html>
